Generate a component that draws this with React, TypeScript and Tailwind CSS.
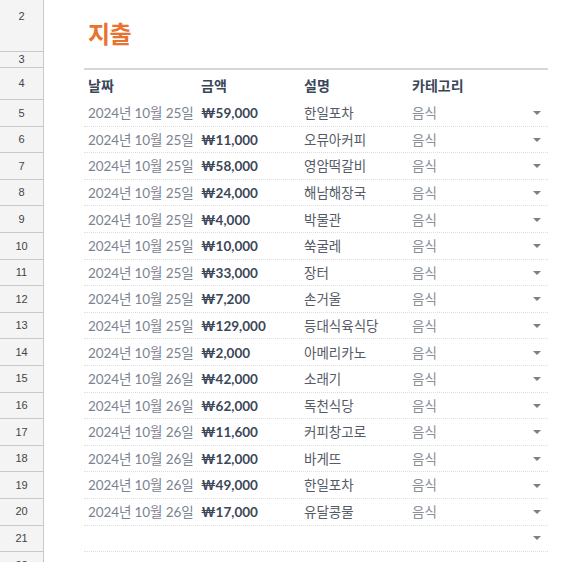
import React from "react";

const rows: [string, string, string][] = [
  ["2024년 10월 25일", "₩59,000", "한일포차"],
  ["2024년 10월 25일", "₩11,000", "오뮤아커피"],
  ["2024년 10월 25일", "₩58,000", "영암떡갈비"],
  ["2024년 10월 25일", "₩24,000", "해남해장국"],
  ["2024년 10월 25일", "₩4,000", "박물관"],
  ["2024년 10월 25일", "₩10,000", "쑥굴레"],
  ["2024년 10월 25일", "₩33,000", "장터"],
  ["2024년 10월 25일", "₩7,200", "손거울"],
  ["2024년 10월 25일", "₩129,000", "등대식육식당"],
  ["2024년 10월 25일", "₩2,000", "아메리카노"],
  ["2024년 10월 26일", "₩42,000", "소래기"],
  ["2024년 10월 26일", "₩62,000", "독천식당"],
  ["2024년 10월 26일", "₩11,600", "커피창고로"],
  ["2024년 10월 26일", "₩12,000", "바게뜨"],
  ["2024년 10월 26일", "₩49,000", "한일포차"],
  ["2024년 10월 26일", "₩17,000", "유달콩물"],
];

function Gutter({ n, h }: { n: number | string; h: string }) {
  return (
    <div
      className={`w-[44px] shrink-0 ${h} bg-[#f4f4f4] border-r border-b border-[#c9c9c9] flex items-center justify-center text-[11px] text-[#444] font-['Liberation_Sans',sans-serif]`}
    >
      {n}
    </div>
  );
}

function Arrow() {
  return (
    <svg width="8" height="4" viewBox="0 0 8 4" className="shrink-0">
      <path d="M0 0 L8 0 L4 4 Z" fill="#808080" />
    </svg>
  );
}

export default function App() {
  return (
    <div className="w-[580px] h-[562px] overflow-hidden bg-white font-['Lato','Noto_Sans_CJK_KR',sans-serif]">
      <div className="-mt-[18px]">
        <div className="flex">
          <Gutter n={2} h="h-[70px]" />
          <div className="flex-1 h-[70px] pl-[44px] flex items-end pb-[6px]">
            <span className="text-[24px] font-bold text-[#e8722e] leading-none tracking-[-0.5px]">지출</span>
          </div>
        </div>
        <div className="flex">
          <Gutter n={3} h="h-[16px]" />
          <div className="flex-1 h-[16px]" />
        </div>
        <div className="flex">
          <Gutter n={4} h="h-[32px]" />
          <div className="flex-1 pl-[40px] pr-[32px] h-[32px]">
            <div className="h-full border-t-2 border-[#d6d6d6] flex items-center text-[14px] font-bold text-[#3b4758]">
              <div className="w-[113px] pl-[4px]">날짜</div>
              <div className="w-[103px] pl-[4px]">금액</div>
              <div className="w-[108px] pl-[4px]">설명</div>
              <div className="flex-1 pl-[4px]">카테고리</div>
            </div>
          </div>
        </div>
        {rows.map((r, i) => (
          <div className="flex" key={i}>
            <Gutter n={i + 5} h="h-[26.6px]" />
            <div className="flex-1 pl-[40px] pr-[32px] h-[26.6px]">
              <div className="h-full border-b border-dotted border-[#dcdcdc] flex items-center text-[13.5px] pt-[1px]">
                <div className="w-[113px] pl-[4px] text-[#7b8391] whitespace-nowrap tracking-[-0.1px]">{r[0]}</div>
                <div className="w-[103px] pl-[4px] font-bold text-[#3b4758]">{r[1]}</div>
                <div className="w-[108px] pl-[4px] text-[#555b66]">{r[2]}</div>
                <div className="flex-1 pl-[4px] text-[#8a8f98] flex items-center justify-between pr-[7px]">
                  <span>음식</span>
                  <Arrow />
                </div>
              </div>
            </div>
          </div>
        ))}
        <div className="flex">
          <Gutter n={21} h="h-[26.6px]" />
          <div className="flex-1 pl-[40px] pr-[32px] h-[26.6px]">
            <div className="h-full border-b border-dotted border-[#dcdcdc] flex items-center justify-end pr-[7px]">
              <Arrow />
            </div>
          </div>
        </div>
        <div className="flex">
          <Gutter n={22} h="h-[26.6px]" />
          <div className="flex-1" />
        </div>
      </div>
    </div>
  );
}
